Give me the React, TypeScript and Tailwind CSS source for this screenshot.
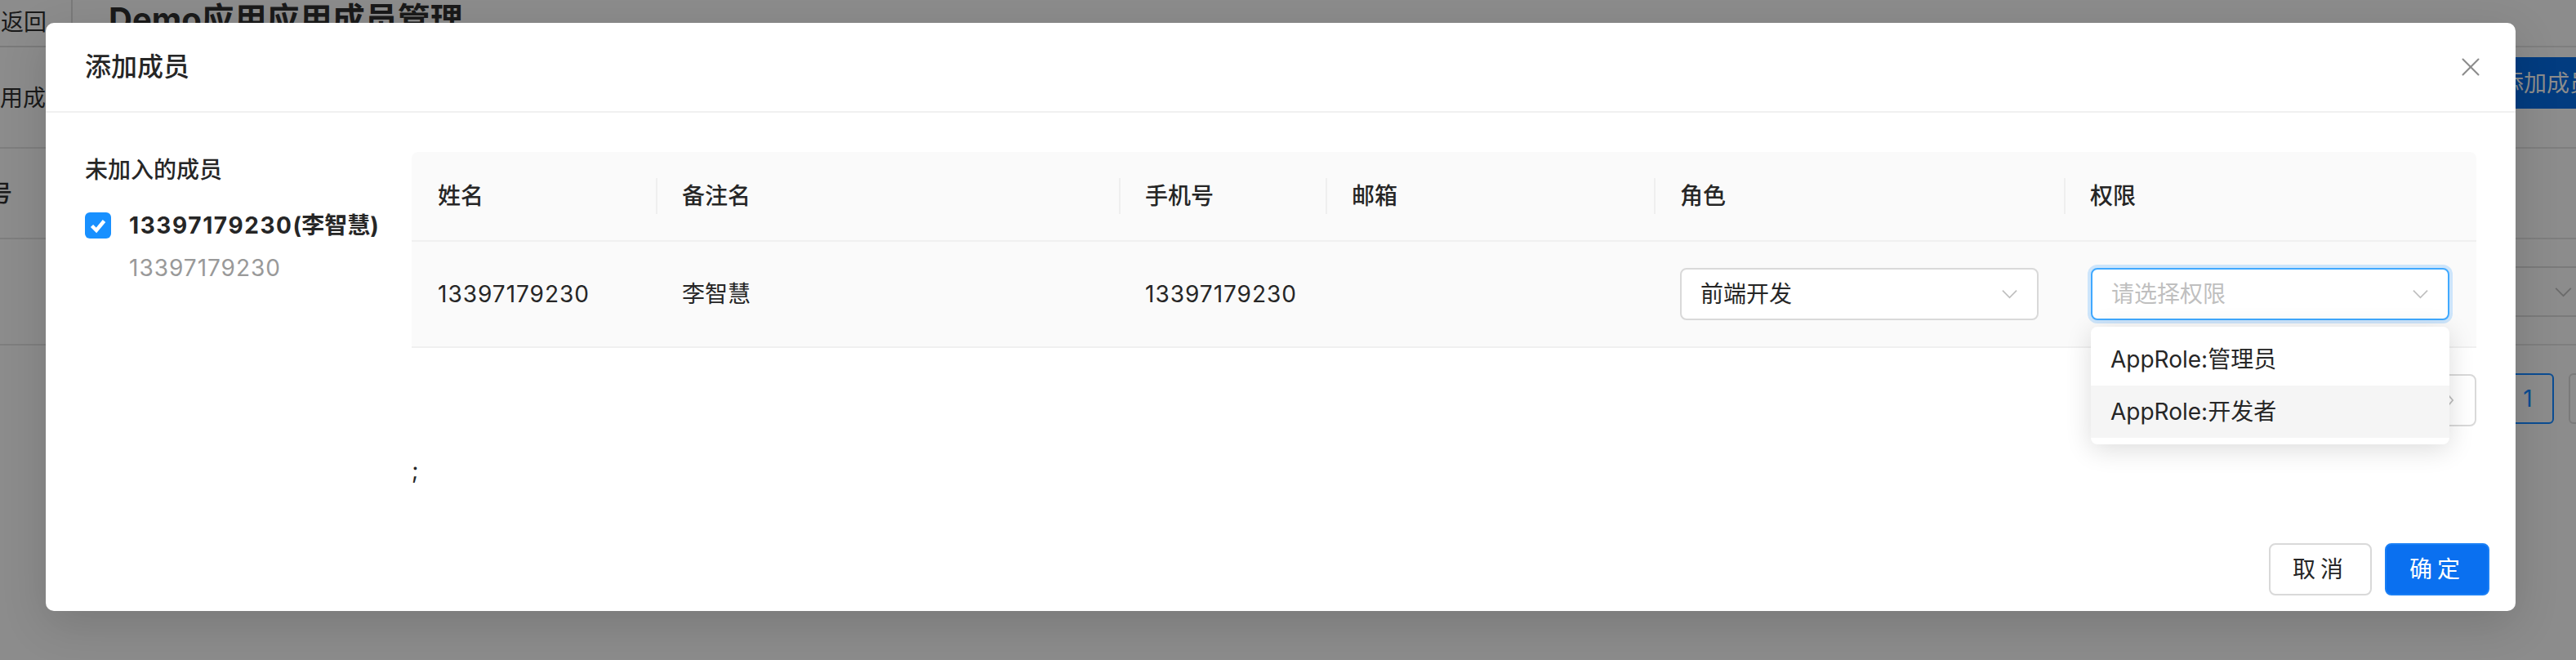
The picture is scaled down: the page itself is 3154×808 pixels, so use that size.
import { X } from 'lucide-react';

function Chevron({ className }: { className?: string }) {
	return (
		<svg viewBox="0 0 22 14" className={className} fill="none" stroke="currentColor" strokeWidth={2}>
			<path d="M1 2 L11 12 L21 2" />
		</svg>
	);
}

function CheckBox() {
	return (
		<span className="flex h-[32px] w-[32px] flex-none items-center justify-center rounded-[6px] bg-[#1890ff]">
			<svg viewBox="0 0 32 32" className="h-[32px] w-[32px]" fill="none" stroke="white" strokeWidth={4.5}>
				<path d="M8.5 16.5 L14 22 L23.5 10.5" />
			</svg>
		</span>
	);
}

const cols = 'grid grid-cols-[299px_567px_253px_402px_502px_1fr]';
const sep =
	"relative before:absolute before:left-0 before:top-1/2 before:h-[44px] before:w-[2px] before:-translate-y-1/2 before:bg-[#efefef] before:content-['']";

function Background() {
	return (
		<div className="flex flex-col text-[#1a1a1a]">
			<div className="flex h-[58px] items-start border-b-2 border-[#7e7e7e]">
				<div className="-ml-[31px] -mt-[12px] flex h-[70px] w-[120px] flex-none items-center justify-center rounded-[8px] border-2 border-[#7a7a7a] pt-[8px] text-[28px]">
					返回
				</div>
				<div className="ml-[44px] mt-[4px] text-[40px] font-bold leading-none">Demo应用应用成员管理</div>
			</div>
			<div className="flex h-[124px] items-start justify-between border-b-2 border-[#7e7e7e]">
				<div className="-ml-[28px] mt-[42px] text-[28px] leading-[40px]">应用成员列表</div>
				<div className="-mr-[46px] mt-[12px] flex h-[63px] w-[150px] items-center rounded-[6px] bg-[#023c80] pl-[12px] text-[28px] text-[#8c8c8c]">
					添加成员
				</div>
			</div>
			<div className="flex h-[111px] items-center border-b-2 border-[#7e7e7e]">
				<div className="-ml-[13px] text-[28px] font-medium">号</div>
			</div>
			<div className="flex h-[130px] items-center justify-end border-b-2 border-[#7e7e7e]">
				<div className="-mr-[21px] flex h-[62px] w-[200px] items-center justify-end rounded-[6px] border-2 border-[#7a7a7a] pr-[24px] text-[#6b6b6b]">
					<Chevron className="h-[13px] w-[21px]" />
				</div>
			</div>
			<div className="-mr-[55px] mt-[34px] flex justify-end gap-[18px]">
				<div className="flex h-[62px] w-[64px] items-center justify-center rounded-[6px] border-2 border-[#0b4d93] text-[28px] text-[#0b4d93]">
					1
				</div>
				<div className="flex h-[62px] w-[64px] items-center justify-center rounded-[6px] border-2 border-[#7a7a7a]" />
			</div>
		</div>
	);
}

function Select({ text, placeholder, focused }: { text?: string; placeholder?: string; focused?: boolean }) {
	return (
		<div
			className={
				focused
					? 'flex h-[64px] w-full items-center justify-between rounded-[8px] border-2 border-[#40a9ff] bg-white pl-[23px] pr-[23px] shadow-[0_0_0_4px_rgba(24,144,255,0.2)]'
					: 'flex h-[64px] w-full items-center justify-between rounded-[8px] border-2 border-[#d9d9d9] bg-white pl-[23px] pr-[23px]'
			}
		>
			{text ? <span className="text-[#262626]">{text}</span> : <span className="text-[#bfbfbf]">{placeholder}</span>}
			<Chevron className="h-[12px] w-[21px] text-[#bfbfbf]" />
		</div>
	);
}

export default function App() {
	return (
		<div className="relative h-[808px] w-[3154px] overflow-hidden bg-[#8c8c8c] font-[Inter,'Noto_Sans_CJK_SC',sans-serif]">
			<Background />

			<div className="absolute left-[56px] top-[28px] flex h-[720px] w-[3024px] flex-col rounded-[10px] bg-white text-[28px] text-[#262626] shadow-[0_16px_56px_rgba(0,0,0,0.14)]">
				<div className="flex h-[110px] flex-none items-center justify-between border-b-2 border-[#f0f0f0] pl-[48px] pr-[36px]">
					<div className="text-[32px] font-medium">添加成员</div>
					<X className="h-[38px] w-[38px] text-[#8c8c8c]" strokeWidth={1.3} />
				</div>

				<div className="flex flex-1 px-[48px] pt-[48px]">
					<div className="w-[400px] flex-none">
						<div className="font-medium leading-[44px]">未加入的成员</div>
						<div className="mt-[24px] flex h-[44px] items-center gap-[22px]">
							<CheckBox />
							<span className="font-bold">
								<span className="tracking-[1.6px]">13397179230</span>(李智慧)
							</span>
						</div>
						<div className="mt-[8px] pl-[54px] leading-[44px] tracking-[1px] text-[#999999]">13397179230</div>
					</div>

					<div className="flex flex-1 flex-col">
						<div className={`${cols} h-[110px] items-center rounded-t-[8px] border-b-2 border-[#f0f0f0] bg-[#fafafa] font-medium`}>
							<div className="px-[32px]">姓名</div>
							<div className={`${sep} h-full content-center px-[32px]`}>备注名</div>
							<div className={`${sep} h-full content-center px-[32px]`}>手机号</div>
							<div className={`${sep} h-full content-center px-[32px]`}>邮箱</div>
							<div className={`${sep} h-full content-center px-[32px]`}>角色</div>
							<div className={`${sep} h-full content-center px-[32px]`}>权限</div>
						</div>
						<div className={`${cols} h-[130px] items-center border-b-2 border-[#f0f0f0] bg-[#fafafa]`}>
							<div className="px-[32px] tracking-[1px]">13397179230</div>
							<div className="px-[32px]">李智慧</div>
							<div className="px-[32px] tracking-[1px]">13397179230</div>
							<div className="px-[32px]"></div>
							<div className="pl-[32px] pr-[31px]">
								<Select text="前端开发" />
							</div>
							<div className="px-[33px]">
								<div className="relative">
									<Select placeholder="请选择权限" focused />
									<div className="absolute left-0 top-[72px] z-10 w-full rounded-[8px] bg-white py-[8px] shadow-[0_6px_32px_rgba(0,0,0,0.14)]">
										<div className="flex h-[64px] items-center px-[24px]">AppRole:管理员</div>
										<div className="flex h-[64px] items-center bg-[#f5f5f5] px-[24px]">AppRole:开发者</div>
									</div>
								</div>
							</div>
						</div>

						<div className="mt-[32px] flex justify-end gap-[16px]">
							<div className="flex h-[64px] w-[64px] items-center justify-center rounded-[8px] border-2 border-[#d9d9d9] text-[#bfbfbf]">‹</div>
							<div className="flex h-[64px] w-[64px] items-center justify-center rounded-[8px] border-2 border-[#1890ff] text-[#1890ff]">1</div>
							<div className="flex h-[64px] w-[64px] items-center justify-center rounded-[8px] border-2 border-[#d9d9d9] text-[#bfbfbf]">
								<svg viewBox="0 0 10 16" className="h-[14px] w-[9px]" fill="none" stroke="currentColor" strokeWidth={2}>
									<path d="M2 1 L8 8 L2 15" />
								</svg>
							</div>
						</div>
						<div className="mt-[32px] leading-[44px]">;</div>
					</div>
				</div>

				<div className="flex flex-none justify-end gap-[16px] px-[32px] pb-[19px] pt-[20px]">
					<div className="flex h-[64px] w-[126px] items-center justify-center rounded-[8px] border-2 border-[#d9d9d9] tracking-[6px] text-[#262626]">
						取消
					</div>
					<div className="flex h-[64px] w-[128px] items-center justify-center rounded-[8px] border-2 border-[#1a7ff5] bg-[#0a70f0] tracking-[6px] text-white">
						确定
					</div>
				</div>
			</div>
		</div>
	);
}
